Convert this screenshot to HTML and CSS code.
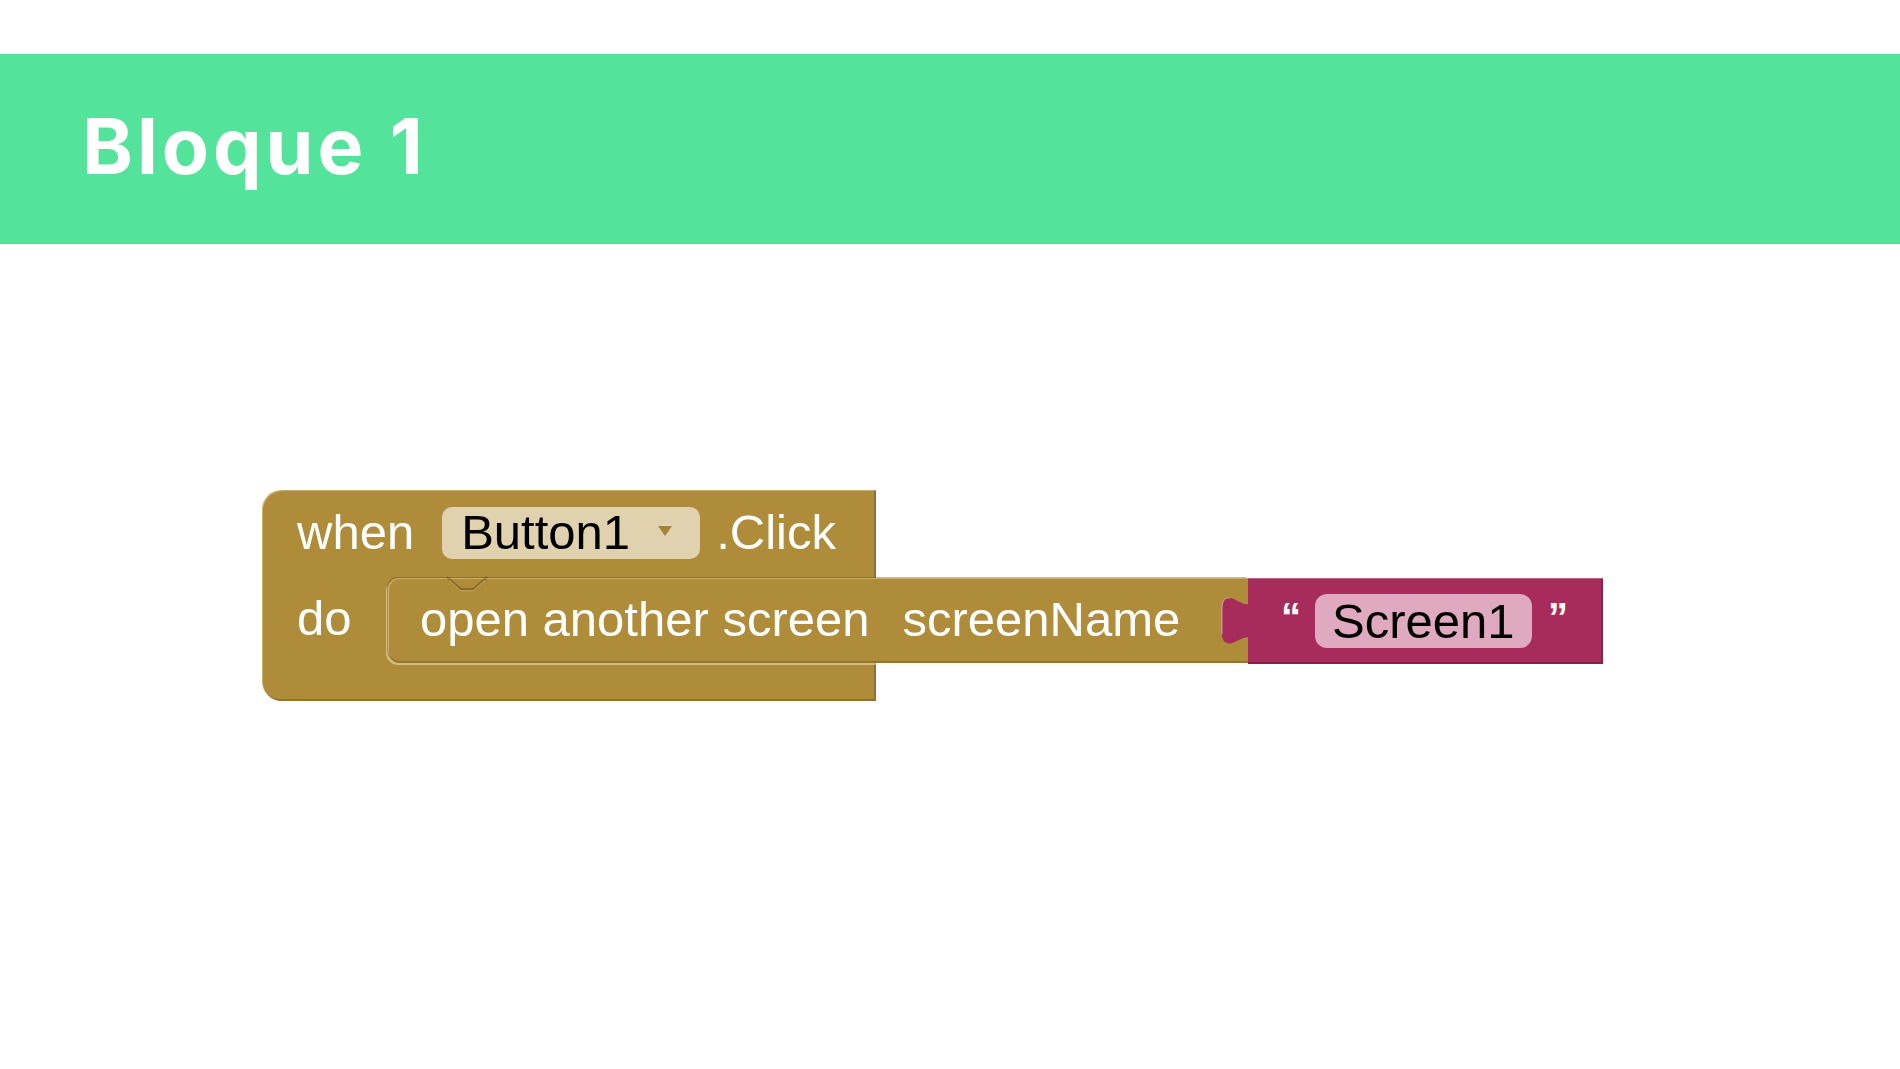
FILE: index.html
```html
<!DOCTYPE html>
<html lang="es">
<head>
<meta charset="utf-8">
<title>Bloque 1</title>
<link rel="stylesheet" href="styles.css">
</head>
<body>
<header class="banner">
  <h1 class="banner-title">Bloque 1</h1>
</header>
<main class="stage">
  <div class="event">
    <div class="event-top">
      <span class="label">when</span>
      <span class="dropdown">
        <span class="dropdown-text">Button1</span>
        <svg class="dropdown-arrow" width="14" height="10" viewBox="0 0 14 10"><polygon points="0,0 14,0 7,10" fill="#a38437"/></svg>
      </span>
      <span class="label click">.Click</span>
    </div>
    <div class="event-mid">
      <div class="spine"><span class="label">do</span></div>
      <div class="statement">
        <svg class="notch" width="42" height="16" viewBox="0 0 42 16"><polyline points="1,1 15,13 27,13 41,1" fill="none" stroke="rgba(70,50,10,0.35)" stroke-width="2"/><polyline points="3,4 15,15 27,15 39,4" fill="none" stroke="rgba(255,240,200,0.25)" stroke-width="1"/></svg>
        <span class="label">open another screen</span>
        <span class="label socket">screenName</span>
      </div>
      <div class="text-block">
        <svg class="tab" width="28" height="48" viewBox="0 0 28 48"><path d="M28,7 C22,9 16,2 9,1 C3,0 1,5 1,12 L1,37 C1,44 5,48 11,46 C17,44 22,40 28,40 Z" fill="#a72c5b"/><path d="M9,1 C3,0 1,5 1,12 L1,37" fill="none" stroke="rgba(255,255,255,0.35)" stroke-width="1.2"/></svg>
        <span class="quote">&#8220;</span>
        <span class="string-field">Screen1</span>
        <span class="quote">&#8221;</span>
      </div>
    </div>
    <div class="event-bottom"></div>
  </div>
</main>
</body>
</html>
```

FILE: styles.css
```css
html, body {
  margin: 0;
  padding: 0;
  background: #ffffff;
}

body {
  width: 1900px;
  height: 1069px;
  overflow: hidden;
  font-family: "Liberation Sans", Arial, sans-serif;
}

.banner {
  margin-top: 54px;
  height: 190px;
  background: #54e39a;
  display: flex;
  align-items: center;
  padding-left: 82px;
  box-sizing: border-box;
}

.banner-title {
  margin: 0 0 6px 0;
  font-family: Inter, "Open Sans", sans-serif;
  font-weight: 700;
  font-size: 77px;
  line-height: 1;
  letter-spacing: 4px;
  color: #ffffff;
}

.stage {
  padding: 246px 0 0 262px;
}

.event {
  width: 614px;
  background: #ae8c3a;
  border-radius: 20px 0 0 20px;
  box-shadow: inset 1px 1px 0 rgba(255, 240, 200, 0.35), inset -2px -2px 0 rgba(90, 65, 15, 0.35);
}

.label {
  color: #ffffff;
  font-size: 49px;
  line-height: 1.15;
  white-space: nowrap;
}

.event-top {
  height: 85px;
  display: flex;
  align-items: center;
  padding-left: 35px;
  box-sizing: border-box;
}

.dropdown {
  margin-left: 28px;
  width: 258px;
  height: 52px;
  box-sizing: border-box;
  padding-left: 19px;
  background: #e0d2ae;
  border-radius: 10px;
  display: flex;
  align-items: center;
}

.dropdown-text {
  color: #000000;
  font-size: 49px;
  line-height: 1.15;
  flex: 0 0 auto;
}

.dropdown-arrow {
  margin-left: 28px;
  margin-top: -4px;
  flex: 0 0 auto;
}

.click {
  margin-left: 16px;
}

.event-mid {
  display: flex;
  height: 92px;
}

.spine {
  flex: 0 0 126px;
  box-sizing: border-box;
  padding: 15px 0 0 35px;
}

.spine .label {
  display: block;
}

.statement {
  position: relative;
  flex: 0 0 860px;
  height: 85px;
  margin-top: 3px;
  box-sizing: border-box;
  padding: 0 0 3px 32px;
  background: #ae8c3a;
  border-radius: 11px 0 0 12px;
  display: flex;
  align-items: center;
  box-shadow: inset 1px 1px 0 rgba(255, 240, 200, 0.35), inset 0 -2px 0 rgba(90, 65, 15, 0.3), -1px -1px 0 rgba(90, 65, 15, 0.35), -2px 2px 0 rgba(255, 245, 220, 0.45);
}

.notch {
  position: absolute;
  left: 58px;
  top: -2px;
}

.socket {
  margin-left: 33px;
}

.text-block {
  position: relative;
  flex: 0 0 355px;
  height: 86px;
  margin-top: 3px;
  box-sizing: border-box;
  padding-left: 33px;
  background: #a72c5b;
  display: flex;
  align-items: center;
  box-shadow: inset 0 1px 0 rgba(255, 200, 220, 0.35), inset -2px -2px 0 rgba(70, 10, 35, 0.3);
}

.tab {
  position: absolute;
  left: -27px;
  top: 19px;
}

.quote {
  align-self: flex-start;
  margin-top: 16px;
  color: #ffffff;
  font-weight: 700;
  font-size: 40px;
  line-height: 1.15;
}

.string-field {
  margin: 0 16px 0 14px;
  height: 54px;
  width: 217px;
  box-sizing: border-box;
  padding-left: 17px;
  background: #dfa9c0;
  border-radius: 12px;
  color: #000000;
  font-size: 49px;
  line-height: 54px;
  white-space: nowrap;
}

.event-bottom {
  height: 34px;
}
```
